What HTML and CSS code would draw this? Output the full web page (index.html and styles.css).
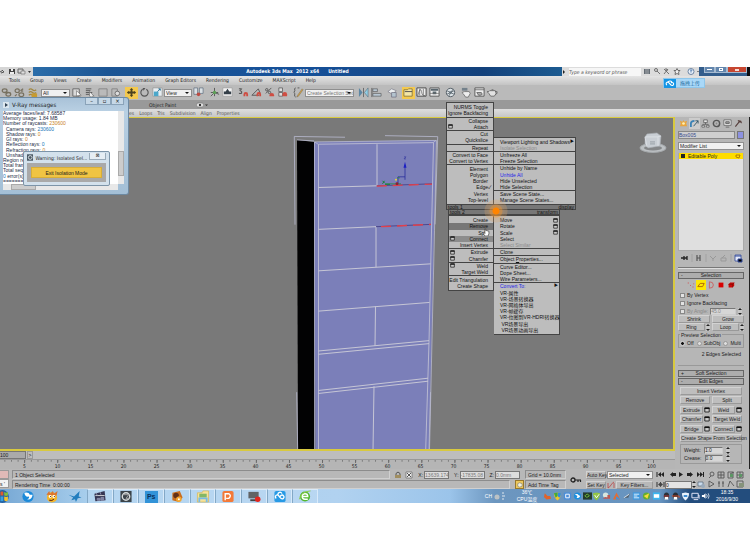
FILE: index.html
```html
<!DOCTYPE html>
<html lang="en">
<head>
<meta charset="utf-8">
<title>Autodesk 3ds Max 2012 x64 - Untitled</title>
<link rel="stylesheet" href="styles.css">
</head>
<body>
<svg class="defs" aria-hidden="true">
  <symbol id="link" viewBox="0 0 12 12"><g fill="none" stroke="#77705f" stroke-width="1.4"><ellipse cx="4" cy="4" rx="2.6" ry="2"/><ellipse cx="8" cy="8" rx="2.6" ry="2"/><path d="M5 5l2 2"/></g></symbol>
  <symbol id="unlink" viewBox="0 0 12 12"><g fill="none" stroke="#77705f" stroke-width="1.3"><ellipse cx="3.5" cy="4" rx="2.3" ry="2"/><ellipse cx="8" cy="8.5" rx="2.6" ry="2"/><path d="M7 4l3-2M3 8l-2 2M8 5l2-1"/></g></symbol>
  <symbol id="bind" viewBox="0 0 12 12"><path d="M2 3q2-2 4 0t4 0M2 6q2-2 4 0t4 0M2 9q2-2 4 0t4 0" fill="none" stroke="#a28843" stroke-width="1.4"/><path d="M5 7h6v4H5z" fill="#c79b30"/></symbol>
  <symbol id="pick" viewBox="0 0 12 12"><path d="M2 2h7v8H2z" fill="#d9d9d9" stroke="#666"/><path d="M6 4l5 5-2 0 1 2-1 0-1-2-2 1z" fill="#fff" stroke="#444" stroke-width=".5"/></symbol>
  <symbol id="names" viewBox="0 0 12 12"><path d="M2 2h6M2 4h5M2 6h7M2 8h4" stroke="#555"/><path d="M6 5l5 5-2 0-1 1-2-1z" fill="#eee" stroke="#444" stroke-width=".5"/></symbol>
  <symbol id="region" viewBox="0 0 12 12"><path d="M2 2h9v8H2z" fill="none" stroke="#777" stroke-width=".8"/></symbol>
  <symbol id="cross" viewBox="0 0 12 12"><path d="M2 2h6v8H2z" fill="none" stroke="#777" stroke-width=".8"/><circle cx="8" cy="7" r="2.5" fill="#ddd" stroke="#555" stroke-width=".8"/></symbol>
  <symbol id="move" viewBox="0 0 12 12"><path d="M6 1l2 2H7v2h2V4l2 2-2 2V7H7v2h1l-2 2-2-2h1V7H3v1L1 6l2-2v1h2V3H4z" fill="#4b421f"/></symbol>
  <symbol id="rotate" viewBox="0 0 12 12"><path d="M4 2.5A4 4 0 1 0 8 2.5" fill="none" stroke="#555" stroke-width="1.2"/><path d="M4 1h3L5 4z" fill="#555"/></symbol>
  <symbol id="scale" viewBox="0 0 12 12"><path d="M1 1h10v9H1z" fill="#e8eef2" stroke="#888" stroke-width=".6"/><path d="M2 5h5v5H2z" fill="#4ba7ca"/><path d="M6 5l3-3M7 2h2v2" stroke="#276e92" fill="none"/></symbol>
  <symbol id="pivot" viewBox="0 0 12 12"><path d="M1 1h4v7H1zM7 1h4v6H7z" fill="#dae0e4" stroke="#567" stroke-width=".7"/><circle cx="6" cy="8" r="2" fill="#bd4b42"/></symbol>
  <symbol id="axes" viewBox="0 0 12 12"><path d="M6 1v5M6 6l-4 4M6 6l5 2M6 6v4M2 6h8" stroke="#555" fill="none"/><circle cx="6" cy="6" r="1.8" fill="#5c9f55"/></symbol>
  <symbol id="keys" viewBox="0 0 12 12"><path d="M1 1h10v9H1z" fill="#f2f2f2" stroke="#888" stroke-width=".5"/><path d="M6 2l2 3h2v3H2V5h2z" fill="#343f48"/></symbol>
  <symbol id="snap" viewBox="0 0 12 12"><path d="M1 2h3l-2 2q3 0 2 3H1" fill="none" stroke="#444"/><path d="M6 10V8a2 2 0 0 1 5 0v2H9V8H8v2z" fill="#cf4d42"/></symbol>
  <symbol id="angle" viewBox="0 0 12 12"><path d="M8 2L1 9h8M8 2l2 5" fill="none" stroke="#555"/><path d="M6 10V8a2 2 0 0 1 5 0v2H9V8H8v2z" fill="#cf4d42"/></symbol>
  <symbol id="percent" viewBox="0 0 12 12"><path d="M2 7l6-6" stroke="#555"/><circle cx="3" cy="3" r="1.3" fill="none" stroke="#555"/><circle cx="6" cy="6" r="1.3" fill="none" stroke="#555"/><path d="M6 10V9a2 2 0 0 1 5 0v1z" fill="#cf4d42"/></symbol>
  <symbol id="spin" viewBox="0 0 12 12"><path d="M2 1h4v4H2zM2 6h4v4H2z" fill="#ddd" stroke="#555" stroke-width=".8"/><path d="M6 10V8a2 2 0 0 1 5 0v2z" fill="#cf4d42"/></symbol>
  <symbol id="edit" viewBox="0 0 12 12"><path d="M3 1q-2 0-1 3l-1 2 1 1q-1 4 1 4M7 1h-2" fill="none" stroke="#555"/><path d="M5 9l5-7 1 1-5 7-2 1z" fill="#d9a443" stroke="#555" stroke-width=".4"/></symbol>
  <symbol id="mirror" viewBox="0 0 12 12"><path d="M1 1l4 5-4 5z" fill="#5d87a4"/><path d="M11 1L7 6l4 5z" fill="#92cfe5" stroke="#567" stroke-width=".6"/><path d="M6 1v10" stroke="#444" stroke-width=".7"/></symbol>
  <symbol id="align" viewBox="0 0 12 12"><path d="M1 1v10" stroke="#555"/><path d="M2 2h5v3H2zM2 7h9v3H2z" fill="#b8c7d3" stroke="#555" stroke-width=".7"/></symbol>
  <symbol id="layers" viewBox="0 0 12 12"><path d="M1 5l4-3 5 2-4 4z" fill="#eceff0" stroke="#667" stroke-width=".6"/><path d="M5 6h5v5H5z" fill="#b4c4cf" stroke="#667" stroke-width=".7"/></symbol>
  <symbol id="ribbon" viewBox="0 0 12 12"><path d="M1 3h4l1-1h4v8H1z" fill="#f4e6a6" stroke="#77652a" stroke-width=".8"/><path d="M2 5h8" stroke="#4a4a4a"/></symbol>
  <symbol id="curve" viewBox="0 0 12 12"><path d="M1 1h10v9H1z" fill="#eee" stroke="#444"/><path d="M2 9q3-10 4-4t4 4M4 2v7M8 2v7" stroke="#555" fill="none" stroke-width=".7"/></symbol>
  <symbol id="schematic" viewBox="0 0 12 12"><path d="M1 1h10v9H1z" fill="#eee" stroke="#555"/><path d="M2 2h8v2H2zM4 5h4v3H4z" fill="#59666e"/><path d="M1 7h10" stroke="#666" stroke-width=".7"/></symbol>
  <symbol id="material" viewBox="0 0 12 12"><circle cx="6" cy="6" r="4.6" fill="#dce2e6" stroke="#505a61"/><path d="M2 4l8 4M4 10l5-8M2 8l8-4" stroke="#68737b"/><circle cx="6" cy="6" r="1.5" fill="#64727b"/></symbol>
  <symbol id="teapot" viewBox="0 0 12 12"><path d="M3 4h6l1 3-2 3H4L2 7 0 5h2zM5 3h2" fill="#e2e2e2" stroke="#555" stroke-width=".8"/><path d="M9 5q3-1 2 2l-2 1" fill="none" stroke="#555" stroke-width=".7"/></symbol>
  <symbol id="setup" viewBox="0 0 12 12"><path d="M4 5h5l1 2-2 4H5L3 8 1 6z" fill="#eee" stroke="#555" stroke-width=".7"/><path d="M1 1h6v3H1z" fill="#74818b"/></symbol>
  <symbol id="frame" viewBox="0 0 12 12"><path d="M1 1h10v9H1z" fill="#eee" stroke="#555"/><path d="M1 3h10M3 6h5l1 2-2 1H5z" stroke="#555" stroke-width=".8" fill="#aaa"/></symbol>
  <symbol id="win" viewBox="0 0 6 6"><path d="M.8 1h4.4v4H.8z" fill="#ccc" stroke="#222" stroke-width=".9"/><path d="M.5 1.3h5" stroke="#111" stroke-width="1.5"/></symbol>
  <symbol id="cursor" viewBox="0 0 8 10"><path d="M2 1v6L1 6 0 7l2 3h4l1-3V4L3 3V1z" fill="#fff" stroke="#222" stroke-width=".7"/></symbol>
</svg>

<div class="app">
  <header class="titlebar">
    <div class="quick">
      <svg viewBox="0 0 33 9"><path d="M0 5q3-3 4 0M2 3l2 2-3 1" fill="none" stroke="#555"/><path d="M9 2h6v5H9z" fill="#444"/><path d="M11 2h2v2h-2zM10 5h4v2h-4z" fill="#eee"/><path d="M18 2h5v4h-5z" fill="none" stroke="#666"/><path d="M21 4h4v3h-4z" fill="#ddd" stroke="#666" stroke-width=".6"/><path d="M28 4h3l-1.500 2z" fill="#333"/></svg>
    </div>
    <div class="caption"><b>Autodesk 3ds Max&nbsp; 2012 x64</b><b>Untitled</b></div>
    <div class="infocenter">
      <span class="tri"></span>
      <input class="search" type="text" placeholder="Type a keyword or phrase" aria-label="Search help">
      <svg class="info-icons" viewBox="0 0 56 9"><path d="M1 2h6v5H1z" fill="#626a72"/><path d="M3 2v5M5 2v5" stroke="#ddd" stroke-width=".6"/><circle cx="13" cy="3" r="1.500" fill="none" stroke="#555" stroke-width=".8"/><path d="M14 4l3 3M21 2l5 5M25 2l-4 5M22 2h2v2" stroke="#666" fill="none" stroke-width=".9"/><path d="M34 1.500l1 2h2l-1.500 1.500.5 2.500-2-1-2 1 .5-2.500L31 3.500h2z" fill="#eee" stroke="#444" stroke-width=".7"/><circle cx="48" cy="4.500" r="3" fill="#e8f0fa" stroke="#516d91" stroke-width=".8"/><path d="M47 3.500q1-1.500 2 0l-1 1v1" fill="none" stroke="#245b9b" stroke-width=".8"/><path d="M54 4h2l-1 1z" fill="#222"/></svg>
    </div>
    <div class="winbtns"><button aria-label="Minimize"><i class="min"></i></button><button aria-label="Restore"><i class="max"></i></button><button class="close" aria-label="Close"><i class="x"></i></button></div>
  </header>

  <nav class="menubar"><a href="#">Tools</a><a href="#">Group</a><a href="#">Views</a><a href="#">Create</a><a href="#">Modifiers</a><a href="#">Animation</a><a href="#">Graph Editors</a><a href="#">Rendering</a><a href="#">Customize</a><a href="#">MAXScript</a><a href="#">Help</a></nav>

  <div class="toolbar">
    <div class="grp"><button aria-label="Link"><svg><use href="#link"/></svg></button><button aria-label="Unlink"><svg><use href="#unlink"/></svg></button><button aria-label="Bind"><svg><use href="#bind"/></svg></button></div>
    <label class="combo filter"><select aria-label="Selection filter"><option>All</option></select></label>
    <div class="grp wide"><button aria-label="Select"><svg><use href="#pick"/></svg></button><button aria-label="Select by name"><svg><use href="#names"/></svg></button><button aria-label="Region"><svg><use href="#region"/></svg></button><button aria-label="Crossing"><svg><use href="#cross"/></svg></button></div>
    <div class="grp"><button class="on" aria-label="Move"><svg><use href="#move"/></svg></button><button aria-label="Rotate"><svg><use href="#rotate"/></svg></button><button aria-label="Scale"><svg><use href="#scale"/></svg></button></div>
    <label class="combo coords"><select aria-label="Reference coordinates"><option>View</option></select></label>
    <div class="grp wide"><button aria-label="Pivot"><svg><use href="#pivot"/></svg></button></div>
    <div class="grp wide"><button aria-label="Manipulate"><svg><use href="#axes"/></svg></button><button aria-label="Keyboard override"><svg><use href="#keys"/></svg></button></div>
    <div class="grp wide"><button aria-label="Snap"><svg><use href="#snap"/></svg></button><button aria-label="Angle snap"><svg><use href="#angle"/></svg></button><button aria-label="Percent snap"><svg><use href="#percent"/></svg></button><button aria-label="Spinner snap"><svg><use href="#spin"/></svg></button></div>
    <div class="grp"><button aria-label="Edit sets"><svg><use href="#edit"/></svg></button></div>
    <label class="combo sets"><select aria-label="Selection sets"><option>Create Selection Set</option></select></label>
    <div class="grp wide"><button aria-label="Mirror"><svg><use href="#mirror"/></svg></button><button aria-label="Align"><svg><use href="#align"/></svg></button></div>
    <div class="grp wide"><button aria-label="Layers"><svg><use href="#layers"/></svg></button></div>
    <div class="grp wide"><button class="on" aria-label="Ribbon"><svg><use href="#ribbon"/></svg></button><button aria-label="Curve editor"><svg><use href="#curve"/></svg></button><button aria-label="Schematic view"><svg><use href="#schematic"/></svg></button></div>
    <div class="grp wide"><button aria-label="Materials"><svg><use href="#material"/></svg></button></div>
    <div class="grp"><button aria-label="Render setup"><svg><use href="#setup"/></svg></button><button aria-label="Rendered frame"><svg><use href="#frame"/></svg></button><button aria-label="Render"><svg><use href="#teapot"/></svg></button></div>
  </div>
  <div class="ribbon-tabs"><span>Object Paint</span><svg viewBox="0 0 12 6"><rect x=".5" y="1" width="7" height="4" rx="1.500" fill="#ddd" stroke="#777" stroke-width=".6"/><path d="M3 2h2v2H3zM9 2.500h3L10.500 4z" fill="#333"/></svg></div>
  <div class="ribbon-panels"><span>es</span><span>Loops</span><span>Tris</span><span>Subdivision</span><span>Align</span><span>Properties</span></div>

  <div class="workspace">
    <div class="stage">
      <svg class="viewport" viewBox="0 118 673 332" preserveAspectRatio="none" role="img" aria-label="Perspective viewport">
        <path d="M297 140l17 2 1 309h-17z" fill="#020203"/>
        <path d="M314 142l122-2-7 311H315.500z" fill="#7b7fb9"/>
        <g fill="none" stroke="#b9bad1" stroke-width=".8">
          <path d="M295 225l-.7-88.500 50.700.8M385 135.700l52.700 1-2.700 88M296.700 393l1 58M430.500 393l-1.500 58M297 140l17 1"/>
          <path d="M314.500 451V142l122-1.500-2 90-5 220"/>
          <path d="M318.500 451V144.300l115-1.600-4.500 200-3.300 108" stroke="#c6c6d5"/>
          <path d="M314.500 142l4 2.500M436 140.500l-3 2.200"/>
          <path d="M377 144.300v41.700l-58.500 1.700M376 227l-57.500 2.700M376 227v40.700M318.500 271.300l112-7M318.500 311.700l111-8.700M375.500 307l-.5 39.700M318.500 351.700L429 341.300M318.500 355L429 344.300M318.500 391.300L428 379M318.500 394.300L428 382M374 387l-1 64" stroke="#c6c6d5" stroke-width="1"/>
        </g>
        <g fill="none"><path d="M376.700 186L432 184M376 227l55-2.300" stroke="#4d478d"/><path d="M376.700 186.300L432 184.300M381 227l50-2.300" stroke="#e0404c" stroke-width="1.400" stroke-dasharray="10 6"/></g>
        <path d="M405 180v-15M398 184v-7h7" stroke="#2a2f9d" fill="none" stroke-width=".8"/><path d="M403.500 168l1.500-6 1.500 6z" fill="#1c20c4"/><path d="M404 157h2l-2 2h2" fill="none" stroke="#2d309c" stroke-width=".6"/>
        <path d="M401 184h-16M397 178h3" stroke="#2c8a43" fill="none" stroke-width=".8"/><path d="M390 184.500h-5M382.500 181l2 2M384.500 181l-2 3" stroke="#187e35" stroke-width="1"/><circle cx="396" cy="180" r="1" fill="#e6d63b"/><circle cx="397" cy="184" r="1.500" fill="#8b2034"/>
        <g transform="translate(653 143)"><ellipse cx="0" cy="5" rx="13" ry="4.500" fill="#bcc0c3" stroke="#a6aaad"/><ellipse cx="0" cy="5" rx="9" ry="2.500" fill="#858789"/><path d="M-8-6l2-3L4-10l4 3-1 10-12 2-3-4z" fill="#c9ced4" stroke="#a7acb2" stroke-width=".6"/><path d="M-8-6l12 0 4-1M-8-6l2 10M5-6l0 9" fill="none" stroke="#e4e7eb" stroke-width=".7"/><path d="M-3-1h5M-3 1h5" stroke="#8d949c" stroke-width=".8"/></g>
      </svg>
      <div class="slider"><button class="thumb">100</button><button class="step">&gt;</button></div>
      <div class="ruler">
        <svg viewBox="0 0 673 5" preserveAspectRatio="none"><path d="M4.400 1.500H656" stroke="#777" stroke-width="3" stroke-dasharray=".9 5.700"/><path d="M24.100 2.500H656" stroke="#666" stroke-width="5" stroke-dasharray=".9 32.100"/></svg>
        <div class="ticks"><span>5</span><span>10</span><span>15</span><span>20</span><span>25</span><span>30</span><span>35</span><span>40</span><span>45</span><span>50</span><span>55</span><span>60</span><span>65</span><span>70</span><span>75</span><span>80</span><span>85</span><span>90</span><span>95</span><span>100</span></div>
      </div>
    </div>

    <aside class="panel">
      <div class="tabs">
        <button aria-label="Create"><svg viewBox="0 0 10 10"><path d="M5 1l1 2 3-1-1 3 1 3H1l1-3-1-3 3 1z" fill="#e9a53c"/><circle cx="5" cy="5" r="1.500" fill="#fff0b0"/></svg></button>
        <button class="sel" aria-label="Modify"><svg viewBox="0 0 10 10"><path d="M1 9V5q0-3 4-3" fill="none" stroke="#3b82b5" stroke-width="2"/><path d="M4 8l5-6M6 2h3v3" fill="none" stroke="#356" /></svg></button>
        <button aria-label="Hierarchy"><svg viewBox="0 0 10 10"><path d="M3 1h4v3H3zM1 7h3v2H1zM6 7h3v2H6zM5 4v2M2 7V6h6v1" fill="#e3e3e3" stroke="#555" stroke-width=".8"/></svg></button>
        <button aria-label="Motion"><svg viewBox="0 0 10 10"><circle cx="5" cy="5" r="3.500" fill="none" stroke="#555" stroke-width="1.600"/><circle cx="5" cy="5" r="1" fill="#888"/></svg></button>
        <button aria-label="Display"><svg viewBox="0 0 10 10"><path d="M1 1h8v6H1z" fill="#eee" stroke="#555" stroke-width=".8"/><path d="M3 3h4v2H3zM3 9h4" stroke="#666" fill="#999"/></svg></button>
        <button aria-label="Utilities"><svg viewBox="0 0 10 10"><path d="M4 1l4 1 1 3-2-1-1 0L2 9 1 8l4-5z" fill="#563f3c"/></svg></button>
      </div>
      <div class="namerow"><input type="text" value="Box005" aria-label="Object name"><span class="swatch"></span></div>
      <label class="combo mods"><select aria-label="Modifier list"><option>Modifier List</option></select></label>
      <div class="stack"><div class="entry"><i></i><span>Editable Poly</span><svg viewBox="0 0 6 6"><path d="M1 2h4L4 5 1 4z" fill="none" stroke="#a56b00" stroke-width=".8"/></svg></div></div>
      <div class="stacktools"><svg viewBox="0 0 66 10"><path d="M3 5h3M6 3v4M6 5h3M9 3v4" stroke="#222" stroke-width="1.300"/><path d="M14 1v8M28 1v8M53 1v8" stroke="#999" stroke-width=".6"/><path d="M19 2v6M22 2v6M19 5h3" stroke="#555" stroke-width="1.200"/><path d="M32 3l3 3 3-3M35 6v2M43 5h5v3h-5zM44 5l3-3" fill="none" stroke="#999"/><path d="M57 2h6v6h-6z" fill="#e5eaf8" stroke="#334a9a" stroke-width=".8"/><path d="M57 3h6M60 6h4v3h-4z" stroke="#334a9a"/></svg></div>
      <hr>
      <section class="rollout first">
        <h2><i>-</i>Selection</h2>
        <div class="subobj">
          <button aria-label="Vertex"><svg viewBox="0 0 10 10"><path d="M1 2h1v1H1zM4 5h1v1H4zM7 7h1v1H7zM8 3h1v1H8z" fill="#d33"/></svg></button>
          <button class="on" aria-label="Edge"><svg viewBox="0 0 10 10"><path d="M1 7l3-4 5 0-2 4z" fill="none" stroke="#b56a00" stroke-width="1.200"/></svg></button>
          <button aria-label="Border"><svg viewBox="0 0 10 10"><path d="M3 1q5 0 5 4T3 9M3 1v8" fill="none" stroke="#c55"/></svg></button>
          <button aria-label="Polygon"><svg viewBox="0 0 10 10"><path d="M2 2h6v6H2z" fill="#d80000"/></svg></button>
          <button aria-label="Element"><svg viewBox="0 0 10 10"><path d="M2 4l2-2h5v4L7 8H2z" fill="#ca0808"/><path d="M2 4h5v4M7 4l2-2" fill="none" stroke="#610" stroke-width=".7"/></svg></button>
        </div>
        <label class="check"><input type="checkbox">By Vertex</label>
        <label class="check"><input type="checkbox">Ignore Backfacing</label>
        <div class="check dim"><label><input type="checkbox" disabled>By Angle:</label><input class="num" type="text" value="45.0" aria-label="Angle" disabled><i class="spinner"></i></div>
        <div class="pair"><button>Shrink</button><button>Grow</button></div>
        <div class="pair"><span><button>Ring</button><i class="spinner"></i></span><span><button>Loop</button><i class="spinner"></i></span></div>
        <fieldset class="preview"><legend>Preview Selection</legend><label><input type="radio" name="pv" checked>Off</label><label><input type="radio" name="pv">SubObj</label><label><input type="radio" name="pv">Multi</label></fieldset>
        <p class="count">2 Edges Selected</p>
      </section>
      <section class="rollout"><h2><i>+</i>Soft Selection</h2></section>
      <section class="rollout last">
        <h2><i>-</i>Edit Edges</h2>
        <div class="edges">
          <button class="full">Insert Vertex</button>
          <div class="pair"><button>Remove</button><button>Split</button></div>
          <div class="pair"><span><button>Extrude</button><svg class="w"><use href="#win"/></svg></span><span><button>Weld</button><svg class="w"><use href="#win"/></svg></span></div>
          <div class="pair"><span><button>Chamfer</button><svg class="w"><use href="#win"/></svg></span><button>Target Weld</button></div>
          <div class="pair"><span><button>Bridge</button><svg class="w"><use href="#win"/></svg></span><span><button>Connect</button><svg class="w"><use href="#win"/></svg></span></div>
          <button class="full">Create Shape From Selection</button>
          <div class="weights"><label>Weight:<input class="num" type="text" value="1.0"><i class="spinner"></i></label><label>Crease:<input class="num" type="text" value="0.0"><i class="spinner"></i></label></div>
        </div>
      </section>
    </aside>
  </div>

  <footer class="status">
    <div class="listener"><i></i><i>s '</i></div>
    <div class="lines">
      <div class="line"><span class="well grow">1 Object Selected</span>
        <svg class="lock" viewBox="0 0 24 8"><path d="M3 4V2.500q2-3 4 0V4" fill="none" stroke="#555"/><path d="M2 4h6v3H2z" fill="#a08e60"/><path d="M13 1h6v6h-6z" fill="#eee" stroke="#666" stroke-width=".7"/><path d="M14 2l4 4M18 2l-4 4" stroke="#555"/></svg>
        <label>X:<input type="text" value="13639.174"></label><label>Y:<input type="text" value="-17835.08"></label><label>Z:<input type="text" value="0.0mm"></label><span class="well grid">Grid = 10.0mm</span></div>
      <div class="line"><span class="well grow">Rendering Time&nbsp; 0:00:00</span><button class="tagicon" aria-label="Time tag"><svg viewBox="0 0 8 8"><path d="M2 3l2-1 3 1v3l-3 1-2-1z" fill="#f5f1d8" stroke="#777" stroke-width=".7"/></svg></button><span class="well tag">Add Time Tag</span></div>
    </div>
    <svg class="key" viewBox="0 0 12 8"><circle cx="3" cy="4" r="2" fill="none" stroke="#222" stroke-width="1.300"/><path d="M5 4h6M8 4v2M10.500 4v2" stroke="#222" stroke-width="1.200"/></svg>
    <div class="keying"><div><button>Auto Key</button><label class="combo"><select aria-label="Key target"><option>Selected</option></select></label></div><div><button>Set Key</button><svg viewBox="0 0 8 8"><path d="M1 7q2-1 3-3t3-3M1 2v5M7 2v5" fill="none" stroke="#b44" stroke-width=".8"/></svg><button class="filters">Key Filters...</button></div></div>
    <div class="play">
      <svg viewBox="0 0 50 9"><path d="M2 2v5" stroke="#222"/><path d="M6 2v5L3 4.500zM9 2v5L6 4.500zM15 4.500L18 2v5zM18 3h3v3h-3zM24 2l4 2.500L24 7zM32 3h3v3h-3zM35 2l3 2.500L35 7zM42 2l3 2.500L42 7zM45 2l3 2.500L45 7z" fill="#222"/><path d="M48.500 2v5" stroke="#222"/></svg>
      <div><svg viewBox="0 0 10 9"><path d="M2 2v5M9 2v5" stroke="#333"/><path d="M6 2v5L3 4.500zM5 2l3 2.500L5 7z" fill="#444"/></svg><input type="text" value="0" aria-label="Current frame"><i class="spinner"></i><svg viewBox="0 0 10 9"><path d="M2 2h5v4H2z" fill="#cde" stroke="#567" stroke-width=".7"/><circle cx="7" cy="6" r="2" fill="#9ab"/></svg></div>
    </div>
    <svg class="nav" viewBox="0 0 38 18"><g fill="none" stroke="#555" stroke-width=".9"><circle cx="6" cy="4" r="2"/><path d="M5 6l-2 2M12 2h6v6h-6zM12 5h6M15 2v6M22 2h5v6h-5z"/><path d="M24 4l4-2M31 2h6v6h-6zM31 5h6M34 2v6"/><path d="M3 11l5 3-5 3zM13 11v6M17 11v6M12 13h2M16 13h2M22 17l2-6 4 5M31 11h6v6h-6z"/></g><path d="M24 4h3v3h-3zM33 4h3v3h-3z" fill="#5b9664"/><path d="M33 13h5v4h-5z" fill="#86937b"/></svg>
  </footer>

  <footer class="taskbar">
    <button class="start" aria-label="Start"><svg viewBox="0 0 14 14"><circle cx="2" cy="7" r="7" fill="#2462a3"/><path d="M0 2q2-1 3 0v4H0z" fill="#e15a2d"/><path d="M4 2q2 2 4 0v4q-2 1-4 0z" fill="#83bd3b"/><path d="M0 7h3v5H0z" fill="#3ba0df"/><path d="M4 7q2 1 4 0v4q-2 2-4 0z" fill="#f4c22d"/></svg></button>
    <div class="pins">
      <button aria-label="Browser"><svg viewBox="0 0 14 14"><circle cx="7" cy="7" r="6" fill="#1c8ad9"/><path d="M3 3q5-1 6 2l3 0q-1 6-6 5 3-1 2-3-4 1-5-4z" fill="#fff"/></svg></button>
      <button aria-label="Chat"><svg viewBox="0 0 14 14"><circle cx="7" cy="8" r="5.500" fill="#f4b52a"/><path d="M1 5l3-4 1 3 3-3 1 3 4-3-1 5z" fill="#dc7430"/><circle cx="5" cy="7" r="1.500" fill="#fff"/><circle cx="9" cy="7" r="1.500" fill="#fff"/><path d="M5 7h1M9 7h1M4 11q3 1 5-1" fill="none" stroke="#411"/></svg></button>
      <button aria-label="Bird"><svg viewBox="0 0 14 14"><path d="M0 5l6 2 6-6-1 6 3 1-4 1-2 4-1-3-4 1 2-3z" fill="#217dbe"/></svg></button>
      <button class="open" aria-label="Media"><svg viewBox="0 0 14 14"><path d="M1 4l11-3 1 10-11 1z" fill="#353653"/><path d="M2 6h10" stroke="#ddd"/><path d="M3 3l1 3M7 2l1 3M4 9h3v2H4zM8 8h3v3H8z" stroke="#8a8da9" fill="#7b80a2"/></svg></button>
      <button class="open" aria-label="3ds Max"><svg viewBox="0 0 14 14"><rect x="1" y="1" width="12" height="12" fill="#3a4349"/><circle cx="7" cy="7" r="4" fill="none" stroke="#d8dddd" stroke-width="1.500"/><path d="M4 5l6 0-3 4 4 0" stroke="#aaa" fill="none"/></svg></button>
      <button class="open ps" aria-label="Photoshop"><b>Ps</b></button>
      <button class="open" aria-label="Player"><svg viewBox="0 0 14 14"><path d="M2 3l8-2 3 7-4 5-7-2z" fill="#c96d1e"/><circle cx="6" cy="6" r="3" fill="#613017"/><circle cx="9" cy="10" r="3" fill="#f2a632"/><circle cx="9" cy="10" r="1" fill="#fff"/></svg></button>
      <button class="open" aria-label="Files"><svg viewBox="0 0 14 14"><path d="M1 3h5l1-2h6v12H1z" fill="#f6e29a" stroke="#d6b44d" stroke-width=".7"/><path d="M3 4h8v4H3z" fill="#84b765"/><path d="M3 13V9h8v4" fill="none" stroke="#79bbe4" stroke-width="2"/></svg></button>
      <button class="open" aria-label="Presentation"><svg viewBox="0 0 14 14"><rect x="1" y="1" width="12" height="12" rx="2" fill="#f37938"/><path d="M4 11V4h4q3 2 0 5H5" fill="none" stroke="#fff" stroke-width="1.500"/></svg></button>
      <button class="open" aria-label="Recorder"><svg viewBox="0 0 14 14"><path d="M1 2h11v7H1z" fill="#616365"/><path d="M3 11h6" stroke="#444" stroke-width="2"/><circle cx="11" cy="10" r="3" fill="#e3251e"/></svg></button>
      <button class="open" aria-label="Cloud"><svg viewBox="0 0 14 14"><rect x="1" y="1" width="12" height="12" rx="2" fill="#279ae5"/><path d="M3 9a2 2 0 1 1 3-2l2 2a2 2 0 1 0 0-3L7 7M5 5a2 2 0 0 1 4-1" fill="none" stroke="#fff" stroke-width="1.400"/></svg></button>
      <button class="open" aria-label="Green browser"><svg viewBox="0 0 14 14"><circle cx="7" cy="7" r="5.500" fill="#55b82f"/><path d="M4 7h6q0-3-3-3T4 7t3 3h3" fill="none" stroke="#fff" stroke-width="1.500"/><path d="M1 10Q2 2 13 1" stroke="#8dcc45" fill="none"/></svg></button>
    </div>
    <div class="lang">CH <svg viewBox="0 0 12 12"><circle cx="3" cy="7" r="2.500" fill="#bcc2c5"/><path d="M8 3h2M8 6h3M8 9h2" stroke="#dfe7ee"/></svg></div>
    <div class="temp"><span>36℃</span><span>CPU温度</span></div>
    <div class="tray">
      <svg viewBox="0 0 10 10"><path d="M2 2l3 3 3 0 1 3-5 1-3-3z" fill="#df642c"/></svg>
      <svg viewBox="0 0 10 10"><path d="M1 2l4-1 4 1q0 5-4 8-4-3-4-8z" fill="#f0c72c"/><path d="M5 1l4 1q0 3-2 5L5 5z" fill="#318ce1"/><path d="M1 2l4-1v4L3 7z" fill="#42a93d"/></svg>
      <svg viewBox="0 0 10 10"><rect x="1" y="1" width="8" height="8" rx="1" fill="#4a8ed9"/><path d="M3 3h4v4H3z" fill="none" stroke="#fff"/></svg>
      <svg viewBox="0 0 10 10"><circle cx="5" cy="5" r="4" fill="#1e8fdd"/><path d="M2 3q4-1 4 1l2 1q-1 3-4 2l1-2z" fill="#fff"/></svg>
      <svg viewBox="0 0 10 10"><path d="M0 1h10v8H0z" fill="#243b2c"/><path d="M2 5q3-4 5 0-3 3-5 0" fill="none" stroke="#71bd33"/></svg>
      <svg viewBox="0 0 10 10"><path d="M1 2l4-1 4 1q0 5-4 8-4-3-4-8z" fill="#92c546"/><path d="M3 4l2 3 3-4" fill="none" stroke="#fff"/></svg>
      <svg viewBox="0 0 10 10"><circle cx="4" cy="4" r="3" fill="#d8e5df"/><path d="M1 8q3-4 6 0zM6 4h3v4H6z" fill="#bf5751"/></svg>
      <svg viewBox="0 0 10 10"><path d="M5 1l4 8H1z" fill="#e36d35"/><path d="M5 5l4 4H4z" fill="#3f94dd"/></svg>
      <svg viewBox="0 0 10 10"><path d="M1 8l8-6-2 5-3 0z" fill="#536371"/><path d="M2 7l6-4" stroke="#e0e6ee"/></svg>
      <svg viewBox="0 0 10 10"><path d="M1 1h8v8H1z" fill="#3e99df"/><path d="M2 3h6M2 5h4M2 7h6" stroke="#e8f5ff"/></svg>
      <svg viewBox="0 0 10 10"><circle cx="5" cy="5" r="4" fill="#62ad33"/><path d="M2 5l6-3-2 6z" fill="#f8dd37"/></svg>
      <svg viewBox="0 0 10 10"><path d="M1 1h8v8H1z" fill="#3cb5f0"/><path d="M2 3h6v4H2z" fill="#fff"/></svg>
      <svg viewBox="0 0 10 10"><ellipse cx="5" cy="5" rx="3" ry="4" fill="#2b3139"/><path d="M3 6h4v3H3z" fill="#fff"/><path d="M2 5h6" stroke="#c33"/></svg>
      <svg viewBox="0 0 10 10"><ellipse cx="5" cy="5" rx="3" ry="4" fill="#292c34"/><path d="M3 6h4v3H3z" fill="#fff"/><path d="M1 5h8v2" stroke="#df4b22" fill="none"/></svg>
      <svg viewBox="0 0 10 10"><path d="M1 2l4-1 4 1q0 5-4 8-4-3-4-8z" fill="#e7f2fc"/><path d="M3 4h4v2H3z" fill="#2b83cf"/></svg>
      <svg viewBox="0 0 10 10"><path d="M1 2h7v5H1zM3 9h5M8 4h1v4" fill="none" stroke="#eef"/></svg>
      <svg viewBox="0 0 10 10"><path d="M1 4h2l2-2v6L3 6H1z" fill="#fff"/><path d="M6 3q2 2 0 4M8 2q2 3 0 6" fill="none" stroke="#fff" stroke-width=".8"/></svg>
    </div>
    <time><span>18:35</span><span>2016/9/30</span></time>
  </footer>

  <button class="upload"><svg viewBox="0 0 12 9"><path d="M0 0h12v9H0z" fill="#1695e4"/><path d="M3 6a1.500 1.500 0 1 1 2-2l2 2a1.500 1.500 0 1 0 0-2M4 3q2-2 4 0" fill="none" stroke="#fff" stroke-width="1.100"/></svg><span>拖拽上传</span></button>

  <section class="vray">
    <header><svg viewBox="0 0 6 6"><path d="M0 0h6v6H0z" fill="#dce7ef"/><path d="M2 1l3 2-3 2z" fill="#345"/></svg><span>V-Ray messages</span><div class="vbtns"><button aria-label="Minimize">–</button><button aria-label="Maximize">▫</button><button aria-label="Close">×</button></div></header>
    <div class="log">
      <p>Average faces/leaf: 7.68587</p><p>Memory usage: 1.84 MB</p><p>Number of raycasts: <b class="o">230600</b></p><p class="in">Camera rays: <b>230600</b></p><p class="in">Shadow rays: <b class="o">0</b></p><p class="in">GI rays: <b class="o">0</b></p><p class="in">Reflection rays: <b>0</b></p><p class="in">Refraction rays: <b class="o">0</b></p><p class="in">Unshade</p><p>Region re</p><p>Total fram</p><p>Total sequ</p><p><b>0</b> error(s),</p><p>=======</p>
    </div>
    <div class="vbar"><i></i></div>
    <div class="hbar"><i></i></div>
  </section>
  <section class="warning">
    <header><svg viewBox="0 0 7 7"><rect width="7" height="7" fill="#4a5964"/><circle cx="3.500" cy="3.500" r="2" fill="none" stroke="#dde4e8"/></svg><span>Warning: Isolated Sel...</span><button aria-label="Close">⊠</button></header>
    <div class="pad"><button>Exit Isolation Mode</button></div>
  </section>

  <div class="quad upper">
    <ul class="left">
      <li>NURMS Toggle</li><li>Ignore Backfacing</li><li class="sep">Collapse</li><li><svg><use href="#win"/></svg>Attach</li><li class="sep">Cut</li><li>Quickslice</li><li class="sep">Repeat</li><li class="sep">Convert to Face</li><li>Convert to Vertex</li><li class="sep">Element</li><li>Polygon</li><li>Border</li><li class="tick">Edge</li><li>Vertex</li><li>Top-level</li>
    </ul>
    <ul class="right">
      <li>Viewport Lighting and Shadows<em>▶</em></li><li class="off">Isolate Selection</li><li class="sep">Unfreeze All</li><li>Freeze Selection</li><li class="sep">Unhide by Name</li><li class="blue">Unhide All</li><li>Hide Unselected</li><li>Hide Selection</li><li class="sep">Save Scene State...</li><li>Manage Scene States...</li>
    </ul>
    <div class="bar"><span>tools 1</span><span>display</span></div>
  </div>
  <div class="quad lower">
    <div class="bar"><span>tools 2</span><span>transform</span></div>
    <ul class="left">
      <li>Create</li><li class="hot">Remove</li><li>Split</li><li class="warm"><svg><use href="#win"/></svg>Connect</li><li>Insert Vertex</li><li class="sep"><svg><use href="#win"/></svg>Extrude</li><li><svg><use href="#win"/></svg>Chamfer</li><li class="sep"><svg><use href="#win"/></svg>Weld</li><li>Target Weld</li><li class="sep">Edit Triangulation</li><li>Create Shape</li>
    </ul>
    <ul class="right">
      <li>Move<svg><use href="#win"/></svg></li><li>Rotate<svg><use href="#win"/></svg></li><li>Scale<svg><use href="#win"/></svg></li><li>Select</li><li class="off">Select Similar</li><li class="sep"><u>C</u>lone</li><li class="sep">Object <u>P</u>roperties...</li><li class="sep">Curve Editor...</li><li>Dope Sheet...</li><li>Wire Parameters...</li><li class="sep blue">Convert To:<em>▶</em></li><li>VR-属性</li><li>VR-场景转换器</li><li>VR-网格体导出</li><li>VR-帧缓存</li><li>VR-位图到VR-HDRI转换器</li><li>&nbsp;VR场景导出</li><li>&nbsp;VR场景动画导出</li>
    </ul>
  </div>
  <i class="glow"></i>
  <svg class="pointer"><use href="#cursor"/></svg>
</div>
</body>
</html>
```
FILE: styles.css
```css
* { box-sizing: border-box; }
body {
  margin: 0;
  background: #fff;
  color: #1c1c1c;
  font: 5px/6px "Liberation Sans", "Noto Sans CJK SC", sans-serif;
}
button, input, select { font: inherit; color: inherit; margin: 0; padding: 0; border: 0; border-radius: 0; background: none; min-width: 0; }
a { color: inherit; text-decoration: none; }
p, h2, ul { margin: 0; padding: 0; font-weight: normal; font-size: inherit; list-style: none; }
i, em { font-style: normal; }
svg { display: block; }
.defs { position: absolute; width: 0; height: 0; }

.app { position: relative; margin-top: 67px; background: #b8b8b8; overflow: hidden; }
.titlebar, .menubar, .ribbon-tabs, .ribbon-panels, .vray header, .warning header, .ruler { font-family: "DejaVu Sans Condensed", "Liberation Sans", sans-serif; }

/* title bar */
.titlebar { display: flex; height: 9px; background: #173f77; }
.quick { width: 33px; background: #d5d5d5; }
.quick svg { width: 33px; height: 9px; }
.caption { flex: 1; display: flex; justify-content: center; gap: 9px; color: #fff; line-height: 9px; background: linear-gradient(90deg, #2b6da9, #1c5594 14%, #16519a 50%, #13417b 85%, #1c5b91); }
.infocenter { display: flex; align-items: center; gap: 2px; width: 137px; background: #dcdcdc; }
.tri { border: 2px solid transparent; border-left-color: #222; margin-left: 1px; width: 3px; }
.search { flex: 1; height: 8px; background: #f6f6f6; font-style: italic; }
.search::placeholder { color: #555; }
.info-icons { width: 56px; height: 9px; }
.winbtns { display: flex; width: 51px; padding-left: 5px; background: #335d8c; border-right: 3px solid #0b0c0f; }
.winbtns button { flex: 1; height: 6px; background: #6386ad; border: 1px solid #a5bad0; border-top: 0; display: grid; place-items: center; }
.winbtns .close { flex: 2; background: #c74731; }
.min { width: 5px; height: 1px; background: #fff; }
.max { width: 4px; height: 3px; border: 1px solid #fff; }
.x { width: 4px; height: 2px; background: #f5dcd6; }

.menubar { display: flex; gap: 10px; height: 9px; padding-left: 9px; line-height: 9px; background: linear-gradient(#e4e4e4, #c4c4c4); }

/* main toolbar */
.toolbar { display: flex; align-items: center; height: 15px; background: #bababa; }
.grp { display: flex; }
.grp.wide { margin-right: 3px; }
.grp button { width: 13px; height: 12px; display: grid; place-items: center; }
.grp svg { width: 11px; height: 11px; }
.grp .on { background: #f4c94e; }
.combo { position: relative; display: block; height: 8px; background: #f0f0f0; border: 1px solid #8f8f8f; }
.combo select { display: block; width: 100%; height: 6px; line-height: 6px; appearance: none; padding-left: 1px; outline: 0; }
.combo::after { content: ""; position: absolute; right: 2px; top: 2px; border: 2px solid transparent; border-top-color: #111; border-bottom: 0; }
.filter { width: 29px; margin: 0 0 0 2px; }
.coords { width: 28px; }
.sets { width: 49px; margin-right: 3px; color: #777; }

.ribbon-tabs { display: flex; align-items: center; gap: 20px; height: 9px; padding-left: 149px; background: #999; }
.ribbon-tabs svg { width: 12px; height: 6px; }
.ribbon-panels { display: flex; gap: 5px; height: 8px; padding-left: 129px; line-height: 8px; color: #555; background: linear-gradient(#dedede, #c6c6c6); }

/* workspace */
.workspace { display: flex; }
.stage { flex: 1; min-width: 0; display: flex; flex-direction: column; }
.viewport { flex: 1 1 0; width: 100%; height: 0; min-height: 0; background: #797979; border: solid #d8c93f; border-width: 1px 2px 2px 0; }
.slider { display: flex; height: 8px; gap: 1px; background: #bdbdbd; }
.thumb { width: 26px; text-align: left; background: #aaa; border: 1px solid #777; border-left: 0; line-height: 6px; }
.step { width: 6px; border: 1px solid #999; line-height: 5px; }
.ruler { height: 10px; background: #b5b5b5; border-top: 1px solid #999; }
.ruler svg { width: 100%; height: 3px; }
.ticks { display: grid; grid-template-columns: repeat(20, 1fr); margin: 0 7px 0 8px; text-align: center; }

/* command panel */
.panel { width: 75px; padding: 0 5px 4px 3px; background: #b6b6b6; border-right: 1px solid #222; }
.tabs { display: flex; height: 12px; align-items: center; }
.tabs button { flex: 1; height: 11px; display: grid; place-items: center; }
.tabs svg { width: 9px; height: 9px; }
.tabs .sel { background: #ccc; }
.namerow { display: flex; gap: 2px; height: 8px; margin-top: 2px; }
.namerow input { flex: 1; background: #cfcfcf; border: 1px solid #888; color: #33488c; }
.swatch { width: 7px; background: #8d92e0; border: 1px solid #777; }
.mods { margin-top: 3px; }
.stack { height: 98px; margin-top: 3px; background: #dfdfdf; border: 1px solid #aaa; border-top: 0; }
.entry { display: flex; align-items: center; gap: 3px; padding: 0 2px; background: #ffdc00; }
.entry i { width: 4px; height: 4px; background: #222; }
.entry span { flex: 1; }
.entry svg { width: 6px; height: 6px; }
.stacktools { height: 10px; margin-top: 2px; }
.stacktools svg { width: 100%; height: 10px; }
.panel hr { height: 2px; margin: 4px 0 3px; border: 0; border-top: 1px solid #777; border-bottom: 1px solid #ddd; }
.rollout h2 { position: relative; height: 7px; line-height: 5px; text-align: center; border: 1px solid #666; background: #adadad; }
.rollout h2 i { position: absolute; left: 2px; }
.rollout { margin-bottom: 1px; }
.rollout.first { padding-bottom: 8px; margin-bottom: 4px; border-bottom: 1px solid #999; }
.rollout.last { margin: 0; }
.subobj { display: flex; justify-content: center; height: 12px; padding-top: 1px; }
.subobj button { width: 10px; height: 10px; }
.subobj svg { width: 8px; height: 8px; margin: auto; }
.subobj .on { background: #ffe800; }
.check { display: flex; align-items: center; gap: 2px; height: 8px; padding-left: 2px; }
.check label { display: flex; align-items: center; gap: 2px; }
input[type="checkbox"] { appearance: none; width: 5px; height: 5px; background: #e2e2e2; border: 1px solid #888; }
input[type="radio"] { appearance: none; width: 5px; height: 5px; border-radius: 3px; background: #ddd; border: 1px solid #999; }
input[type="radio"]:checked { background: #111; border-color: #ddd; }
.dim { color: #888; }
.num { width: 26px; height: 7px; background: #d6d6d6; border: 1px solid #777; border-right-color: #ccc; border-bottom-color: #ccc; }
.spinner { width: 4px; height: 7px; display: flex; flex-direction: column; justify-content: space-between; background: #c8c8c8; }
.spinner::before, .spinner::after { content: ""; border: 2px solid transparent; }
.spinner::before { border-top: 0; border-bottom-color: #222; }
.spinner::after { border-bottom: 0; border-top-color: #222; }
.pair { display: grid; grid-template-columns: 1fr 1fr; gap: 2px; }
.rollout button { line-height: 6px; }
.pair button, .full { height: 8px; background: #bebebe; border: 1px solid; border-color: #d2d2d2 #999 #999 #d2d2d2; white-space: nowrap; }
.pair span { display: flex; align-items: center; gap: 1px; min-width: 0; }
.pair span button { flex: 1; }
.w { width: 6px; height: 6px; }
.preview { position: relative; display: flex; justify-content: space-between; height: 14px; margin: 3px 0 0; padding: 5px 2px 0 1px; border: 1px solid #999; min-width: 0; }
.preview legend { position: absolute; top: -3px; left: 1px; padding: 0 1px; background: #b6b6b6; }
.preview label { display: flex; align-items: center; gap: 2px; height: 6px; }
.count { margin-top: 3px; padding-right: 3px; text-align: right; }
.edges { display: flex; flex-direction: column; gap: 1px; padding: 2px 2px 1px; }
.edges .pair:nth-of-type(even), .weights { margin-top: 1px; }
.weights { border: 1px solid #999; padding: 1px 3px; }
.weights label { display: flex; align-items: center; justify-content: flex-end; gap: 3px; height: 8px; padding-right: 8px; }
.weights .num { width: 22px; }

/* status */
.status { display: flex; height: 20px; padding: 1px 6px 0 0; background: #b8b8b8; }
.listener { width: 9px; margin-right: 3px; }
.listener i { display: block; height: 9px; line-height: 9px; background: #dfb9b7; border: 1px solid #999; border-left: 0; }
.listener i + i { background: #f2f2f2; }
.lines { flex: 1; display: flex; flex-direction: column; gap: 1px; }
.line { display: flex; align-items: center; height: 9px; gap: 5px; }
.line label { display: flex; align-items: center; gap: 1px; }
.line input { width: 25px; height: 8px; color: #777; background: #ddd; border: 1px solid #777; }
.well { height: 9px; line-height: 8px; padding-left: 2px; border: 1px solid; border-color: #8c8c8c #d0d0d0 #d0d0d0 #8c8c8c; }
.grow { flex: 1; }
.grid { width: 41px; }
.tag { width: 41px; margin-left: -4px; }
.lock { width: 24px; height: 8px; margin-right: -4px; margin-left: -2px; }
.tagicon { width: 9px; height: 9px; background: #edc85b; border: 1px solid #98782c; }
.key { width: 12px; height: 10px; margin: 5px 4px 0; }
.keying { display: flex; flex-direction: column; gap: 1px; width: 67px; }
.keying > div { display: flex; align-items: center; gap: 1px; height: 9px; }
.keying button { width: 20px; height: 8px; border: 1px solid; border-color: #d2d2d2 #999 #999 #d2d2d2; line-height: 6px; white-space: nowrap; }
.keying .combo { flex: 1; }
.keying svg { width: 8px; height: 8px; }
.keying .filters { flex: 1; }
.play { width: 51px; margin-left: 2px; }
.play > svg { width: 50px; height: 9px; }
.play div { display: flex; align-items: center; height: 9px; margin-top: 1px; }
.play div svg { width: 10px; height: 9px; }
.play input { flex: 1; height: 8px; background: #e4e4e4; border: 1px solid #777; }
.nav { width: 38px; height: 18px; }

/* taskbar */
.taskbar { display: flex; height: 14px; align-items: center; color: #fff; background: linear-gradient(90deg, #77a8d4, #a9cfed 12%, #b1d2f0 45%, #9bc4ea 60%, #6c96bf 66%, #6794c0 88%, #234d7d 92%); }
.start { width: 16px; }
.start svg, .pins svg { width: 14px; height: 13px; }
.pins { display: flex; width: 302px; }
.pins button { flex: 1; height: 14px; display: grid; place-items: center; }
.pins .open { background: #c5dff466; border: 1px solid #d8eafa; border-left-color: #83a8c6; border-bottom: 0; }
.ps b { width: 13px; height: 12px; font-size: 7px; line-height: 12px; color: #0a315c; background: #3293d8; }
.lang { display: flex; gap: 2px; margin-left: auto; align-items: center; }
.lang svg { width: 12px; height: 12px; }
.temp, time { display: flex; flex-direction: column; align-items: center; line-height: 7px; }
.temp { width: 32px; margin-left: 5px; }
.tray { display: flex; width: 167px; justify-content: space-between; }
.tray svg { width: 9px; height: 10px; }
time { width: 28px; margin: 0 9px 0 3px; }

/* floating items */
.upload { position: absolute; top: 11px; right: 45px; width: 42px; height: 10px; display: flex; align-items: center; background: #a9d8f8; color: #246a9d; border: 1px solid #8fc6ea; }
.upload svg { width: 12px; height: 9px; }
.upload span { flex: 1; }
.vray { position: absolute; left: 0; top: 30px; width: 129px; height: 98px; display: grid; grid-template: 13px 1fr 6px / 1fr 6px; padding: 0 4px 4px 3px; background: linear-gradient(#a9c2d8, #b9d0e3 14%, #a3bfd6); border: 1px solid #6e8aa2; border-left: 0; border-radius: 0 3px 3px 0; }
.vray header { grid-column: 1 / 3; display: flex; align-items: center; gap: 3px; font-size: 6px; }
.vray header svg { width: 6px; height: 6px; }
.vbtns { display: flex; align-self: flex-start; margin-left: auto; }
.vbtns button { width: 13px; height: 7px; line-height: 6px; border: 1px solid #8aa3b9; border-top: 0; background: #c6d8e7; }
.log { display: flex; flex-direction: column; justify-content: space-between; background: #fff; overflow: hidden; white-space: nowrap; line-height: 5px; color: #222a44; }
.log .in { padding-left: 3px; }
.log b { font-weight: normal; color: #1675b8; }
.log .o { color: #c98122; }
.vbar, .hbar { background: #e8e8e8; }
.vbar { display: flex; align-items: flex-end; padding-bottom: 8px; }
.vbar i { width: 6px; height: 25px; background: #ccc; border: 1px solid #aaa; }
.hbar { display: flex; padding-left: 8px; }
.hbar i { width: 25px; background: #ccc; border: 1px solid #aaa; }
.warning { position: absolute; left: 23px; top: 84px; width: 87px; height: 35px; padding: 0 3px 3px; display: flex; flex-direction: column; background: #d3e1ec; border: 1px solid #7c94a8; border-radius: 2px; }
.warning header { display: flex; align-items: center; gap: 2px; height: 11px; white-space: nowrap; }
.warning header svg { width: 7px; height: 7px; }
.warning header button { width: 18px; height: 7px; line-height: 5px; margin: 0 0 3px auto; border: 1px solid #9aabb9; border-top: 0; background: #e6eef4; }
.pad { flex: 1; display: flex; padding: 4px; background: #a9a9a9; }
.pad button { flex: 1; background: #f0c443; border: 1px solid #d8ae38; }

.quad { position: absolute; display: grid; color: #111; white-space: nowrap; }
.upper { left: 446px; top: 35px; width: 124px; height: 108px; grid-template: 103px 5px / 48px 1fr; }
.lower { left: 448px; top: 143px; width: 112px; grid-template: 5px auto / 46px 66px; }
.quad ul { display: flex; flex-direction: column; background: #bdbdbd; border: 1px solid #444; padding: 1px 0; }
.quad li { flex: 1; display: flex; align-items: center; padding: 0 5px; min-height: 0; }
.left li { justify-content: flex-end; }
.upper .right { height: 68px; align-self: end; }
.quad .right { border-left: 0; }
.lower .left { height: 76px; }
.lower .right { height: 120px; }
.quad .right li { justify-content: space-between; padding: 0 1px 0 6px; }
.lower .right li:nth-child(6), .lower .right li:nth-child(7) { justify-content: flex-start; white-space: pre; }
.quad li svg { width: 5px; height: 5px; }
.left li svg { margin-right: auto; margin-left: -4px; }
.quad .sep { border-top: 1px solid #444; }
.quad .off { color: #8c8c8c; }
.quad .blue { color: #2525e8; }
.quad .hot { background: #777; }
.quad .warm { background: #8c8c8c; }
.quad em { font-size: 4px; color: #111; }
.quad .tick { padding-right: 1px; }
.tick::after { content: "✓"; width: 4px; }
.bar { grid-column: 1 / 3; display: flex; justify-content: space-between; padding: 0 1px; line-height: 4px; background: #777; border: 1px solid #444; border-top: 0; }
.glow { position: absolute; left: 484px; top: 132px; width: 24px; height: 24px; border-radius: 50%; background: radial-gradient(circle, #ff8400 0 3px, #ef9a3c99 4px 6px, #dfa36355 7px 8px, #dfa36344 9px 11px, transparent 12px); }
.pointer { position: absolute; left: 483px; top: 161px; width: 7px; height: 8px; }
```
